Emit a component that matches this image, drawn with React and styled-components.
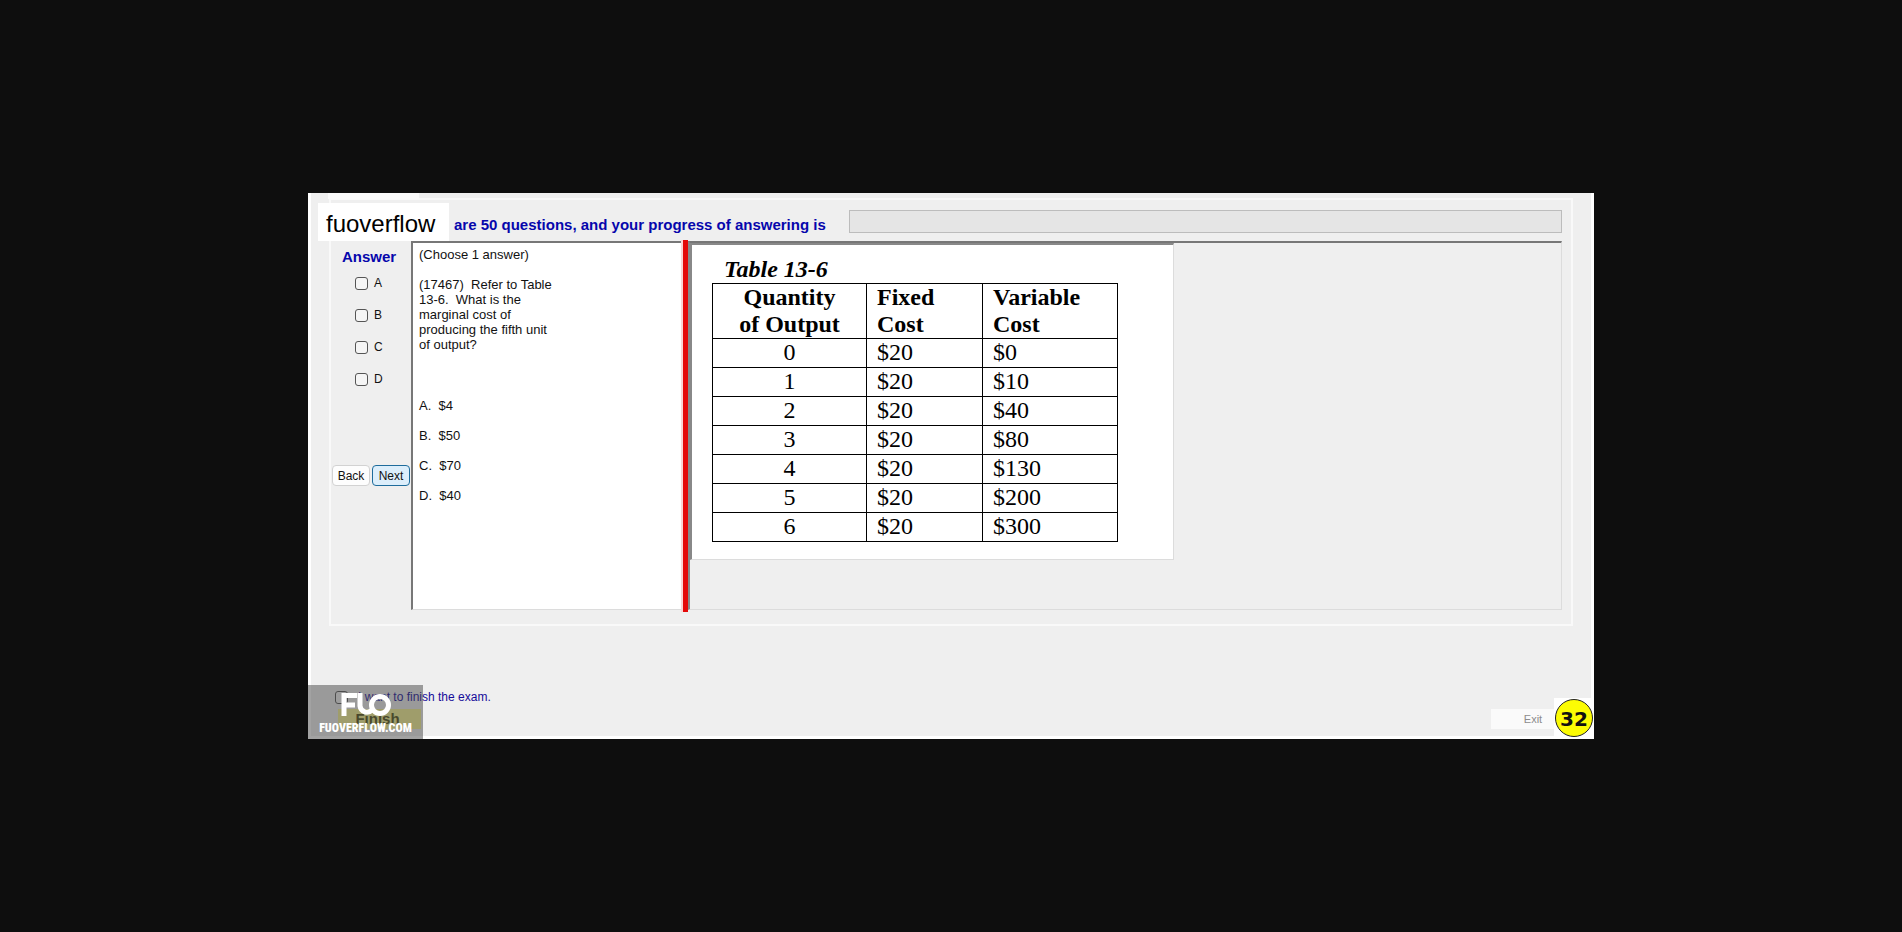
import React from "react";
import styled, { createGlobalStyle } from "styled-components";

const GlobalStyle = createGlobalStyle`
  * { box-sizing: border-box; }
  html, body, #root { height: 100%; }
  body { margin: 0; background: #0e0e0e; font-family: "Liberation Sans", Arial, sans-serif; color: #111; }
  button, input { font: inherit; margin: 0; }
`;

const Page = styled.main`
  min-height: 100%;
  padding: 0 308px;
  display: flex;
  align-items: center;
  justify-content: center;
`;

const Window = styled.section`
  position: relative;
  flex: 1;
  display: flex;
  flex-direction: column;
  background: #efefef;
  border: 3px solid #fff;
  border-top: 0;
`;

const GroupBox = styled.div`
  margin: 5px 18px 0 18px;
  padding: 0 9px 12px 0;
  border: 2px solid #f9f9f9;
`;

const Header = styled.header`
  display: flex;
  align-items: center;
  height: 41px;
  padding-top: 2px;
`;

const TabStub = styled.div`
  position: absolute;
  top: 0;
  left: 17px;
  width: 91px;
  height: 6px;
  background: #fafafa;
`;

const NameTag = styled.div`
  position: absolute;
  top: 10px;
  left: 7px;
  width: 131px;
  height: 38px;
  padding-left: 8px;
  background: #fff;
  color: #000;
  font-size: 24px;
  line-height: 42px;
`;

const ProgressText = styled.label`
  padding: 6px 0 0 123px;
  width: 518px;
  flex: none;
  color: #0606ac;
  font-size: 15px;
  font-weight: bold;
  line-height: 16px;
  white-space: nowrap;
`;

const Progress = styled.progress`
  flex: 1;
  height: 23px;
  appearance: none;
  border: 1px solid #bcbcbc;
  background: #e5e5e5;
  &::-webkit-progress-bar { background: #e5e5e5; }
`;

const Content = styled.div`
  display: flex;
  height: 371px;
`;

const Sidebar = styled.fieldset`
  width: 80px;
  margin: 0;
  padding: 0;
  border: 0;
  display: flex;
  flex-direction: column;
`;

const SideTitle = styled.h2`
  margin: 8px 0 2px 11px;
  color: #0606ac;
  font-size: 15px;
  line-height: 16px;
`;

const Choice = styled.label`
  display: flex;
  align-items: center;
  gap: 6px;
  height: 32px;
  padding-left: 24px;
  font-size: 12px;
  line-height: 14px;
  white-space: nowrap;
`;

const CheckBox = styled.input`
  appearance: none;
  flex: none;
  width: 13px;
  height: 13px;
  border: 1px solid #555;
  border-radius: 3px;
  background: #f5f5f5;
`;

const Nav = styled.nav`
  display: flex;
  gap: 2px;
  margin-top: 70px;
  padding-left: 1px;
`;

const NavButton = styled.button`
  width: 38px;
  height: 21px;
  padding: 0;
  border: 1px solid ${(p) => (p.$active ? "#1e6c9c" : "#d2d2d2")};
  border-radius: 4px;
  background: ${(p) => (p.$active ? "#dceefb" : "#fdfdfd")};
  color: #111;
  font-size: 12px;
  line-height: 18px;
`;

const QuestionPane = styled.article`
  width: 270px;
  height: 369px;
  padding: 4px 6px;
  border-top: 2px solid #777;
  border-left: 2px solid #777;
  border-bottom: 1px solid #dcdcdc;
  background: #fff;
  font-size: 13px;
  line-height: 15px;
`;

const Paragraph = styled.p`
  margin: 0 0 ${(p) => p.$after || 15}px;
  white-space: pre-wrap;
`;

const OptionList = styled.ul`
  margin: 0;
  padding: 0;
  list-style: none;
  li { margin-bottom: 15px; white-space: pre; }
`;

const Divider = styled.div`
  width: 7px;
  margin-top: -1px;
  border-left: 2px solid #fbd5d5;
  background: #e40808;
`;

const FigurePane = styled.div`
  flex: 1;
  height: 369px;
  border: 1px solid #dcdcdc;
  border-top: 2px solid #777;
  border-left: 2px solid #888;
`;

const Figure = styled.figure`
  width: 484px;
  height: 317px;
  margin: 0;
  padding: 10px 20px;
  border-top: 2px solid #888;
  border-left: 2px solid #888;
  border-right: 1px solid #dcdcdc;
  border-bottom: 1px solid #dcdcdc;
  background: #fff;
  color: #000;
  font-family: "Liberation Serif", "Times New Roman", serif;
`;

const DataTable = styled.table`
  border-collapse: collapse;
  table-layout: fixed;
  width: 406px;
  font-size: 24px;
  caption {
    padding-left: 12px;
    font-weight: bold;
    font-style: italic;
    line-height: 28px;
    text-align: left;
  }
  th, td {
    border: 1px solid #000;
    padding: 0 0 0 10px;
    text-align: left;
    line-height: 27px;
  }
  td { line-height: 24px; padding-top: 1px; padding-bottom: 3px; }
  tr > :first-child { padding-left: 0; text-align: center; }
`;

const Col = styled.col`
  width: ${(p) => p.$w}px;
`;

const Footer = styled.footer`
  display: flex;
  justify-content: space-between;
  align-items: flex-end;
  height: 110px;
  padding: 0 2px 7px 24px;
`;

const FinishArea = styled.div`
  display: flex;
  flex-direction: column;
  gap: 4px;
`;

const FinishCheck = styled.label`
  display: flex;
  align-items: center;
  gap: 10px;
  color: #160c9a;
  font-size: 12px;
  line-height: 16px;
`;

const FinishButton = styled.button`
  width: 83px;
  height: 20px;
  margin-left: 3px;
  padding: 0 4px 0 0;
  border: 0;
  background: #f8f590;
  color: #4c4c10;
  font-size: 15px;
  font-weight: bold;
  line-height: 20px;
`;

const ExitButton = styled.button`
  width: 98px;
  height: 20px;
  padding: 0 14px 0 0;
  border: 0;
  background: #fafafa;
  color: #8c8c8c;
  font-size: 11px;
  line-height: 20px;
`;

const Watermark = styled.div`
  position: absolute;
  left: -3px;
  bottom: -3px;
  width: 115px;
  height: 54px;
  display: flex;
  flex-direction: column;
  align-items: center;
  gap: 3px;
  padding-top: 7px;
  background: rgba(70, 70, 70, 0.5);
  color: #fff;
  font-family: "Roboto Condensed", Roboto, sans-serif;
  font-size: 12px;
  font-weight: 900;
  line-height: 16px;
`;

const Counter = styled.div`
  position: absolute;
  right: -3px;
  bottom: -3px;
  width: 40px;
  height: 41px;
  padding: 1px;
  background: #fff;
`;

const CounterDisc = styled.div`
  width: 38px;
  height: 38px;
  border: 1px solid #222;
  border-radius: 50%;
  background: #fcfc04;
  color: #111;
  font-family: "DejaVu Sans", sans-serif;
  font-size: 20px;
  font-weight: bold;
  line-height: 38px;
  text-align: center;
`;

const rows = [
  ["0", "$20", "$0"],
  ["1", "$20", "$10"],
  ["2", "$20", "$40"],
  ["3", "$20", "$80"],
  ["4", "$20", "$130"],
  ["5", "$20", "$200"],
  ["6", "$20", "$300"],
];

export default function App() {
  return (
    <Page>
      <GlobalStyle />
      <Window>
        <TabStub />
        <GroupBox>
          <Header>
            <ProgressText htmlFor="progress">are 50 questions, and your progress of answering is</ProgressText>
            <Progress id="progress" value={0} max={50} />
          </Header>
          <Content>
            <Sidebar>
              <SideTitle>Answer</SideTitle>
              {["A", "B", "C", "D"].map((c) => (
                <Choice key={c}>
                  <CheckBox type="checkbox" />
                  {c}
                </Choice>
              ))}
              <Nav>
                <NavButton type="button">Back</NavButton>
                <NavButton type="button" $active>Next</NavButton>
              </Nav>
            </Sidebar>
            <QuestionPane>
              <Paragraph>(Choose 1 answer)</Paragraph>
              <Paragraph $after={46}>
                {"(17467)  Refer to Table\n13-6.  What is the\nmarginal cost of\nproducing the fifth unit\nof output?"}
              </Paragraph>
              <OptionList>
                <li>{"A.  $4"}</li>
                <li>{"B.  $50"}</li>
                <li>{"C.  $70"}</li>
                <li>{"D.  $40"}</li>
              </OptionList>
            </QuestionPane>
            <Divider />
            <FigurePane>
              <Figure>
                <DataTable>
                  <caption>Table 13-6</caption>
                  <colgroup>
                    <Col $w={154} />
                    <Col $w={116} />
                    <Col $w={135} />
                  </colgroup>
                  <thead>
                    <tr>
                      <th>Quantity<br />of Output</th>
                      <th>Fixed<br />Cost</th>
                      <th>Variable<br />Cost</th>
                    </tr>
                  </thead>
                  <tbody>
                    {rows.map((r) => (
                      <tr key={r[0]}>
                        {r.map((v, i) => <td key={i}>{v}</td>)}
                      </tr>
                    ))}
                  </tbody>
                </DataTable>
              </Figure>
            </FigurePane>
          </Content>
        </GroupBox>
        <Footer>
          <FinishArea>
            <FinishCheck>
              <CheckBox type="checkbox" />
              I want to finish the exam.
            </FinishCheck>
            <FinishButton type="button">Finish</FinishButton>
          </FinishArea>
          <ExitButton type="button" disabled>Exit</ExitButton>
        </Footer>
        <NameTag>fuoverflow</NameTag>
        <Watermark>
          <svg width="50" height="25" viewBox="0 0 50 25" fill="none" stroke="#fff" strokeWidth="5">
            <path d="M3 24V3.500H16M3 13H14" />
            <path d="M19 1V14A7 7 0 0 0 31 18" />
            <circle cx="39" cy="13" r="8.500" />
          </svg>
          FUOVERFLOW.COM
        </Watermark>
        <Counter><CounterDisc>32</CounterDisc></Counter>
      </Window>
    </Page>
  );
}
